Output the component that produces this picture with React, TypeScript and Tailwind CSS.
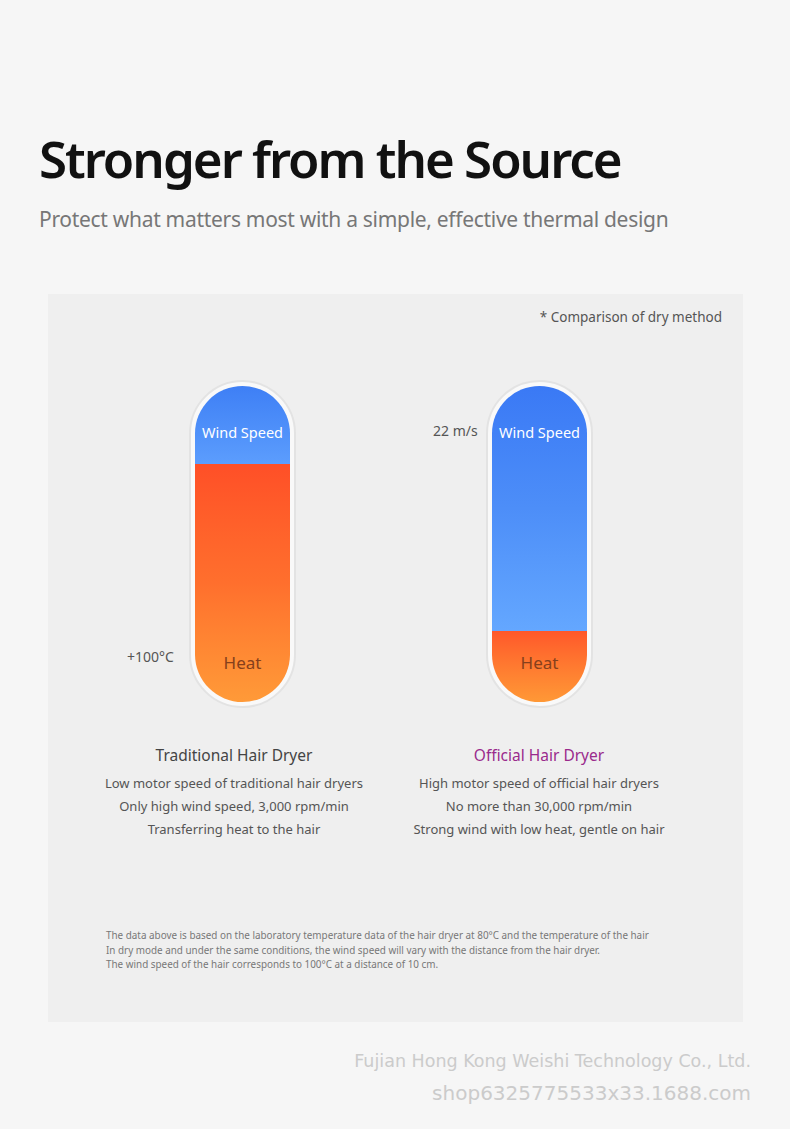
import React from "react";

const font = { fontFamily: '"Noto Sans", "Open Sans", sans-serif' };

function Pill({ blueH, total, blueClass, heatClass }: { blueH: number; total: number; blueClass: string; heatClass: string }) {
  return (
    <div className="w-[107px] rounded-full border-2 border-[#e3e3e3] bg-[#f9f9f9] p-[4px]">
      <div className="flex flex-col overflow-hidden rounded-full" style={{ height: total }}>
        <div className={`flex flex-col items-center ${blueClass}`} style={{ height: blueH }}>
          <span className="mt-[37px] text-[14.5px] leading-[18px] text-white">Wind Speed</span>
        </div>
        <div className={`flex flex-1 flex-col items-center justify-end ${heatClass}`}>
          <span className="mb-[29px] text-[17px] leading-[20px] text-[#86401c]">Heat</span>
        </div>
      </div>
    </div>
  );
}

export default function App() {
  return (
    <div className="min-h-[1129px] w-[790px] bg-[#f6f6f6]" style={font}>
      <div className="px-[39px] pt-[126px]">
        <h1 className="text-[51px] font-semibold leading-[64px] tracking-[-2px] text-[#111]">Stronger from the Source</h1>
        <p className="mt-[15px] text-[21px] leading-[28px] tracking-[-0.3px] text-[#777]">
          Protect what matters most with a simple, effective thermal design
        </p>
      </div>

      <div className="mx-[48px] mt-[61px] h-[728px] w-[695px] bg-[#efefef]">
        <div className="flex justify-end pr-[21px] pt-[14px]">
          <span className="text-[13.5px] leading-[18px] text-[#555]">* Comparison of dry method</span>
        </div>

        <div className="mt-[54px] flex items-start">
          <div className="ml-[79px] flex items-end">
            <span className="mb-[42px] w-[50px] text-[14px] leading-[18px] text-[#555]">+100°C</span>
            <div className="ml-[12px]">
              <Pill
                total={316}
                blueH={78}
                blueClass="bg-gradient-to-b from-[#3e7ff5] to-[#5c9dfd]"
                heatClass="bg-gradient-to-b from-[#ff4f27] via-[#ff6f2d] to-[#ff9a38]"
              />
            </div>
          </div>
          <div className="ml-[137px] flex items-start">
            <span className="mt-[42px] w-[53px] text-[14px] leading-[18px] text-[#555]">22 m/s</span>
            <div>
              <Pill
                total={316}
                blueH={245}
                blueClass="bg-gradient-to-b from-[#3a79f5] via-[#4d8ef8] to-[#64a7ff]"
                heatClass="bg-gradient-to-b from-[#ff572a] to-[#ff9836]"
              />
            </div>
          </div>
        </div>

        <div className="mt-[36px] flex">
          <div className="ml-[46px] flex w-[280px] flex-col items-center text-center">
            <div className="text-[15.5px] leading-[22px] text-[#444]">Traditional Hair Dryer</div>
            <div className="mt-[6px] text-[13px] leading-[23px] text-[#555]">
              <div>Low motor speed of traditional hair dryers</div>
              <div>Only high wind speed, 3,000 rpm/min</div>
              <div>Transferring heat to the hair</div>
            </div>
          </div>
          <div className="ml-[25px] flex w-[280px] flex-col items-center text-center">
            <div className="text-[15.5px] leading-[22px] text-[#9a2a8c]">Official Hair Dryer</div>
            <div className="mt-[6px] text-[13px] leading-[23px] text-[#555]">
              <div>High motor speed of official hair dryers</div>
              <div>No more than 30,000 rpm/min</div>
              <div>Strong wind with low heat, gentle on hair</div>
            </div>
          </div>
        </div>

        <div className="ml-[58px] mt-[87px] text-[9.9px] leading-[14.5px] text-[#777]">
          <div>The data above is based on the laboratory temperature data of the hair dryer at 80°C and the temperature of the hair</div>
          <div>In dry mode and under the same conditions, the wind speed will vary with the distance from the hair dryer.</div>
          <div>The wind speed of the hair corresponds to 100°C at a distance of 10 cm.</div>
        </div>
      </div>

      <div
        className="flex flex-col items-end pr-[39px] pt-[27px] text-[#cbcbcb]"
        style={{ fontFamily: '"DejaVu Sans", sans-serif' }}
      >
        <div className="text-[17.5px] leading-[24px]">Fujian Hong Kong Weishi Technology Co., Ltd.</div>
        <div className="mt-[7px] text-[20px] leading-[26px]">shop6325775533x33.1688.com</div>
      </div>
    </div>
  );
}
